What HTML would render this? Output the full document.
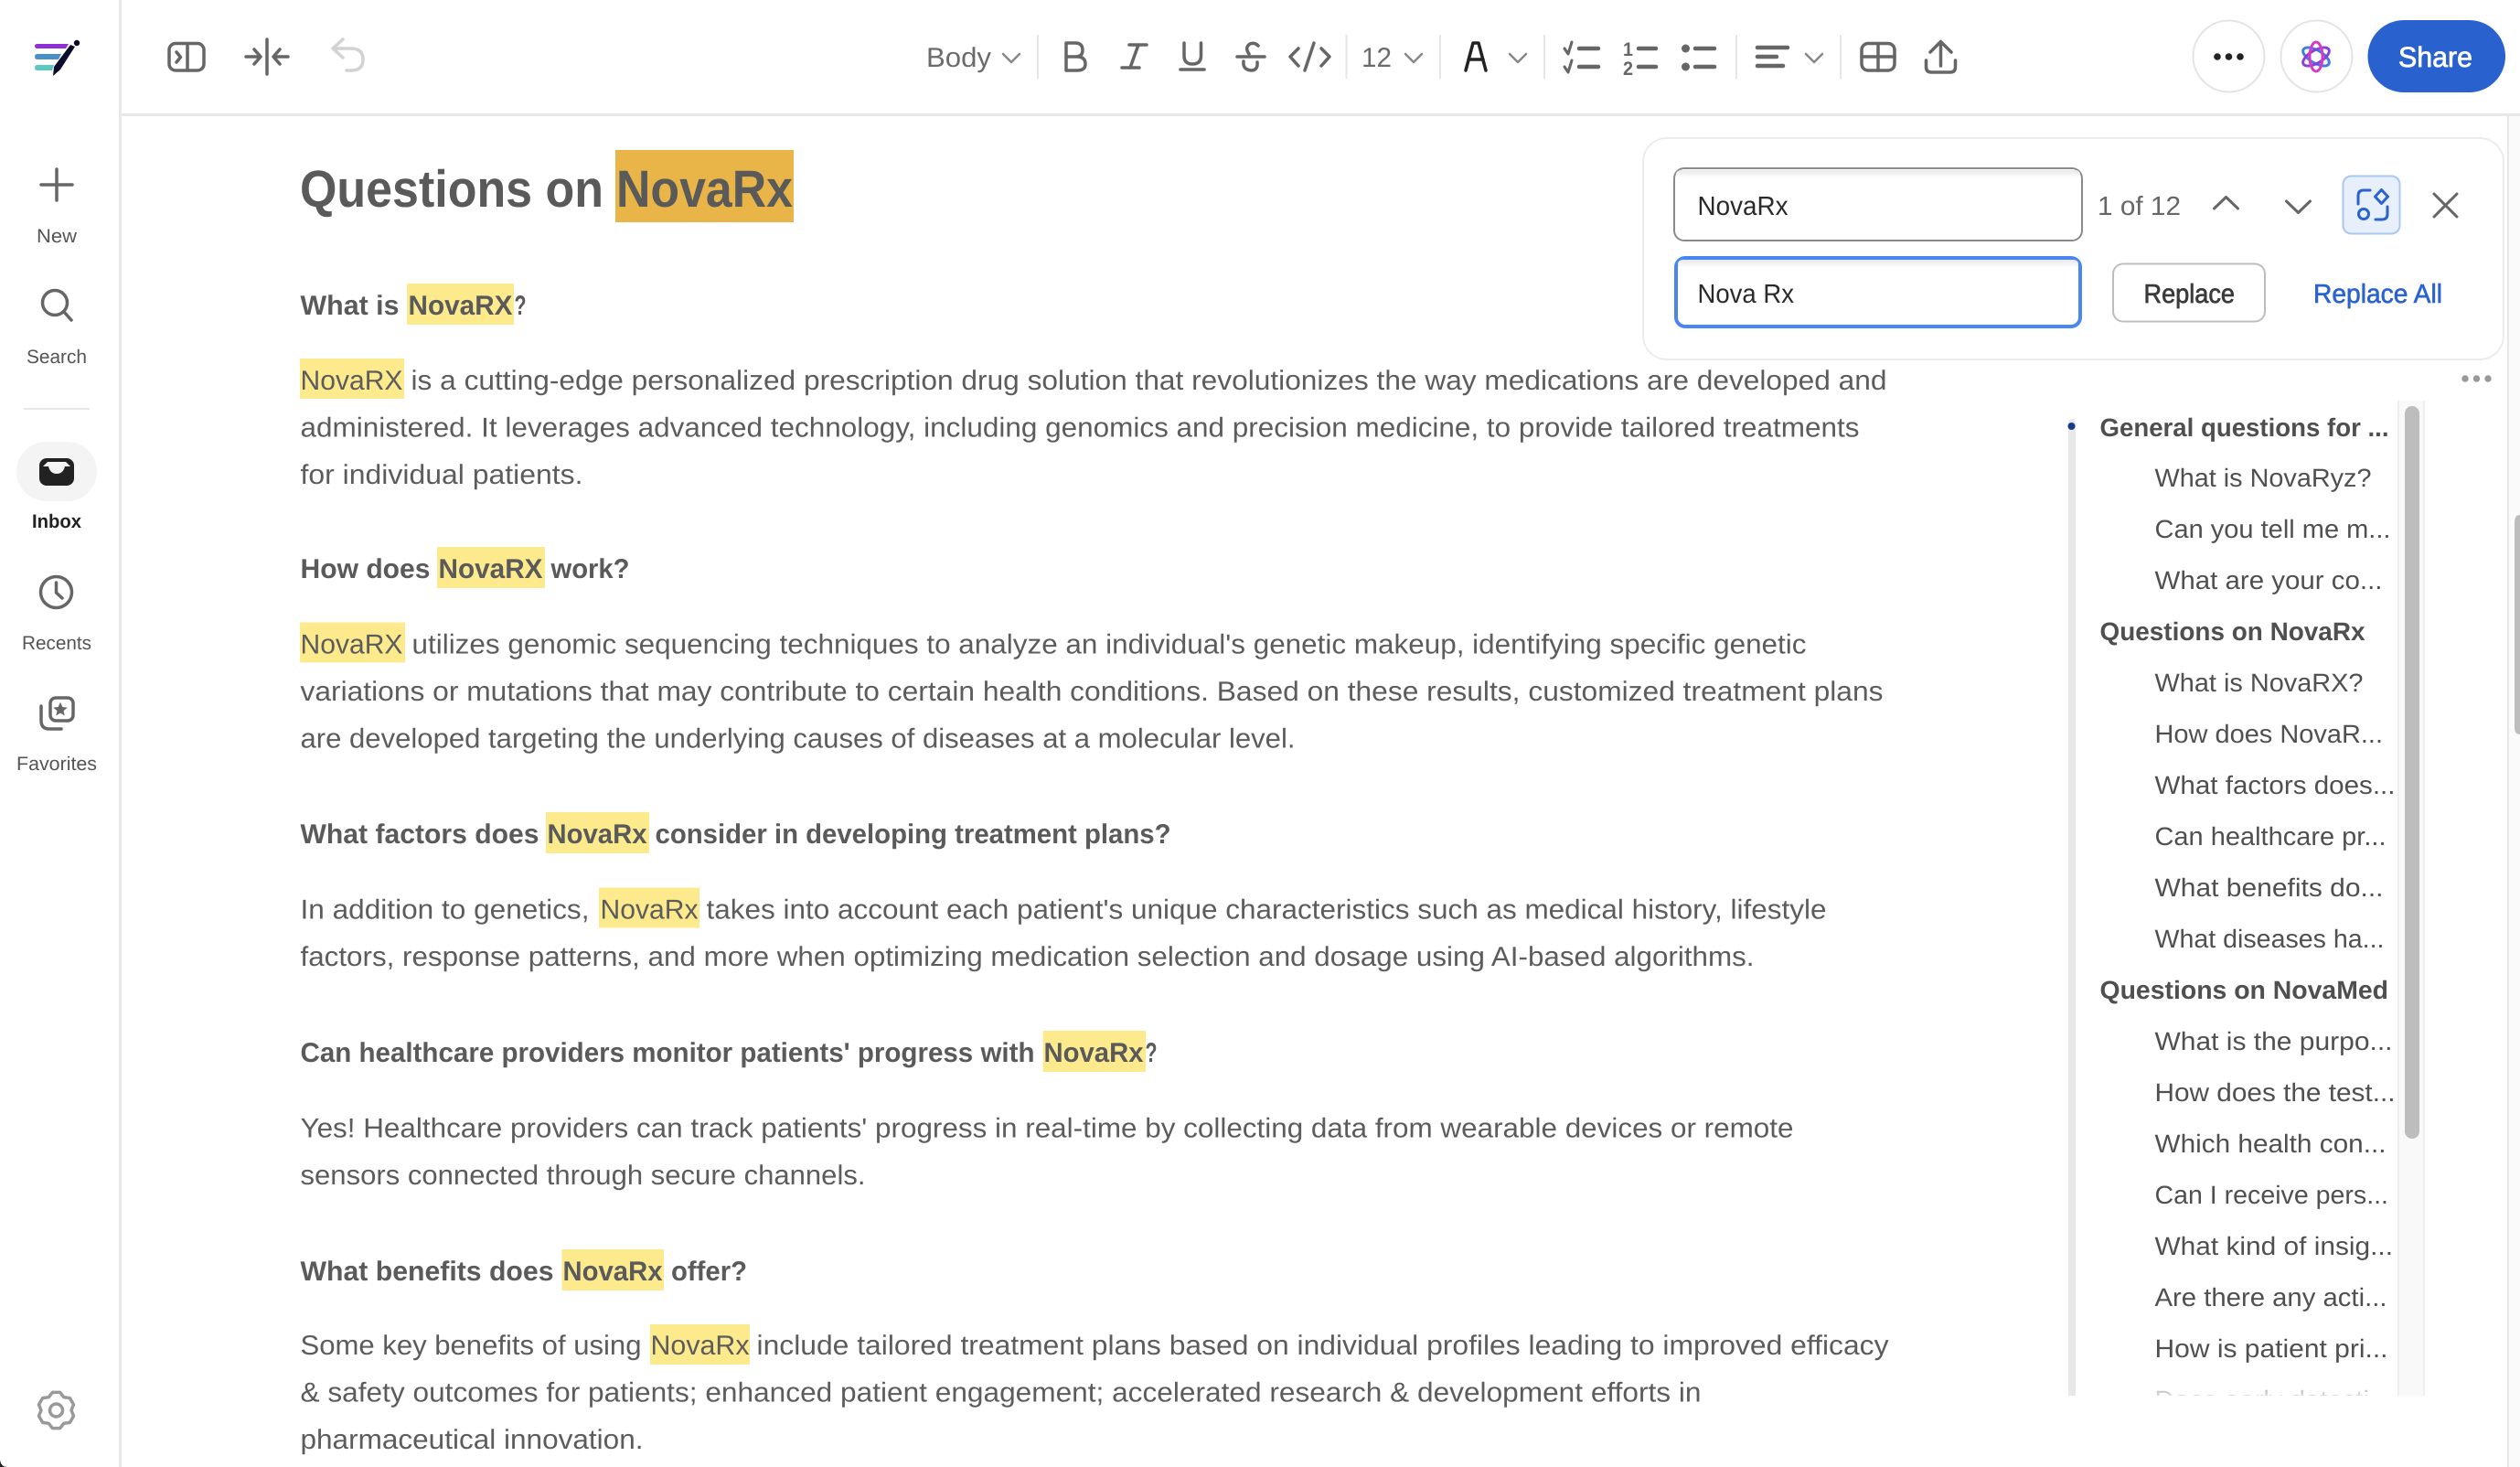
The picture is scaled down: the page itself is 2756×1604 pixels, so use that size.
<!DOCTYPE html>
<html lang="en"><head><meta charset="utf-8"><title>Questions on NovaRx</title>
<style>
html,body{margin:0;padding:0;background:#fff;width:2756px;height:1604px;overflow:hidden}
svg{display:block}
text{font-family:"Liberation Sans",Arial,sans-serif;text-rendering:geometricPrecision}
.b{font-size:30px;fill:#5c5c5c;transform:translate(-0.5px,-1px)}
.h{font-size:30px;font-weight:700;fill:#5a5a5a;transform:translate(-0.5px,-1px)}
.s{font-size:21px;fill:#555}
.t{font-size:28px;fill:#505050;transform:translate(-0.5px,-1px)}
.tb{font-size:28px;font-weight:700;fill:#4f4f4f;transform:translate(-0.5px,-1px)}
.i{fill:none;stroke:#666;stroke-width:3.5;stroke-linecap:round;stroke-linejoin:round}
.ch{fill:none;stroke:#888;stroke-width:2.5;stroke-linecap:round;stroke-linejoin:round}
.sep{stroke:#e6e6e6;stroke-width:2}
.hl{fill:#fcea8d}
</style></head><body>
<svg xmlns="http://www.w3.org/2000/svg" width="2756" height="1604" viewBox="0 0 2756 1604">
<defs>
<linearGradient id="fade" x1="0" y1="0" x2="0" y2="1"><stop offset="0" stop-color="#fff" stop-opacity="0"/><stop offset="1" stop-color="#fff" stop-opacity=".8"/></linearGradient>
<linearGradient id="ins" x1="0" y1="0" x2="0" y2="1"><stop offset="0" stop-color="#e9e9e9"/><stop offset="1" stop-color="#fff"/></linearGradient>
<clipPath id="tocclip"><rect x="2250" y="430" width="410" height="1096"/></clipPath>
</defs>

<!-- frame lines -->
<rect x="130" y="0" width="3" height="1604" fill="#e8e8e8"/>
<rect x="133" y="124" width="2623" height="3" fill="#e8e8e8"/>
<rect x="2742" y="127" width="14" height="1477" fill="#fafafa"/>
<rect x="2742" y="127" width="2" height="1477" fill="#e8e8e8"/>
<path d="M2756 563 Q2750 563 2750 571 V795 Q2750 803 2756 803 Z" fill="#bdbdbd"/>
<path d="M0 1596 Q1 1604 8 1604 H0 Z" fill="#222"/>

<!-- logo -->
<path d="M41 48 H75 L72 53 H41 Q38 53 38 50.5 Q38 48 41 48 Z" fill="#8e2fd8"/>
<path d="M41 59 H67 L64 65 H41 Q38 65 38 62 Q38 59 41 59 Z" fill="#4a90c8"/>
<path d="M41 71 H59 L57 77 H41 Q38 77 38 74 Q38 71 41 71 Z" fill="#5cc8c0"/>
<path d="M58 83 L59 73 L77 49 L82 51 L66 76 Z" fill="#0b0b2e"/>
<circle cx="84" cy="47" r="3.200" fill="#0b0b2e"/>

<!-- sidebar -->
<path d="M62 185 V219 M45 202 H79" class="i"/>
<text x="40" y="265" class="s" textLength="44" lengthAdjust="spacingAndGlyphs">New</text>
<circle cx="60" cy="331" r="13.500" class="i"/>
<path d="M70 341 L78 350" class="i"/>
<text x="29" y="397" class="s" textLength="66" lengthAdjust="spacingAndGlyphs">Search</text>
<rect x="26" y="446" width="72" height="2" fill="#e8e8e8"/>
<rect x="18" y="483" width="88" height="65" rx="32.500" fill="#f4f4f4"/>
<rect x="43" y="501" width="38" height="30" rx="8" fill="#222"/>
<path d="M47 510 L52 505 H72 L77 510 H71 Q69 518 62 518 Q55 518 53 510 Z" fill="#f4f4f4"/>
<text x="35" y="577" font-size="21" font-weight="700" fill="#222" textLength="54" lengthAdjust="spacingAndGlyphs">Inbox</text>
<circle cx="61.500" cy="647.500" r="17" class="i"/>
<path d="M61.500 637 V648 L68 654" class="i"/>
<text x="24" y="710" class="s" textLength="76" lengthAdjust="spacingAndGlyphs">Recents</text>
<rect x="55" y="763" width="25" height="25" rx="6" class="i"/>
<path d="M45 772 V788 Q45 797 54 797 H67" class="i"/>
<path d="M66 769 L68 773.500 L72.500 774 L69 777 L70 781.500 L66 779 L62 781.500 L63 777 L59.500 774 L64 773.500 Z" fill="#666" stroke="#666"/>
<text x="18" y="842" class="s" textLength="88" lengthAdjust="spacingAndGlyphs">Favorites</text>
<path d="M57.300 1522.400 L65.700 1522.400 L69.750 1527.700 L76.400 1528.600 L80.500 1535.800 L78 1542 L80.500 1548.200 L76.400 1555.400 L69.750 1556.300 L65.700 1561.600 L57.300 1561.600 L53.250 1556.300 L46.600 1555.400 L42.500 1548.200 L45 1542 L42.500 1535.800 L46.600 1528.600 L53.250 1527.700 Z" class="i" style="stroke:#999"/>
<circle cx="61.500" cy="1542" r="7" class="i" style="stroke:#999"/>

<!-- toolbar left -->
<rect x="185" y="47.500" width="38" height="29.500" rx="7" class="i"/>
<path d="M205 48 V77" class="i"/>
<path d="M193 57 L197.500 62.500 L193 68" class="i"/>
<path d="M292 43 V81 M269 62 H284 M278 54 L285 62 L278 70 M315 62 H300 M306 54 L299 62 L306 70" class="i"/>
<path d="M375 43 L364 53 L375 63 M364 53 H384 Q397 53 397 65 Q397 77 384 77 H379" class="i" style="stroke:#d2d2d2"/>

<!-- toolbar middle -->
<text x="1013" y="73" font-size="30" fill="#6b6b6b" textLength="71" lengthAdjust="spacingAndGlyphs">Body</text>
<path d="M1097 59 L1106 68 L1115 59" class="ch"/>
<path d="M1135 38 V86 M1472.500 38 V86 M1575 38 V86 M1689 38 V86 M1899 38 V86 M2013 38 V86" class="sep"/>
<path d="M1166 47 H1176 Q1184 47 1184 55 Q1184 62 1176 62 H1166 Z M1166 62 H1178 Q1187 62 1187 70 Q1187 77 1178 77 H1166 Z" class="i"/>
<path d="M1235 49 H1254 M1245 49 L1236 74 M1227 74 H1246" class="i"/>
<path d="M1295 47 V61 Q1295 70 1304 70 Q1313.500 70 1313.500 61 V47 M1291 76 H1317" class="i" />
<path d="M1353 62 H1383 M1376 50 Q1372 46 1367 48 Q1361 52 1366 59 M1360 67 Q1359 76 1368 77 Q1376 77 1375 68" class="i"/>
<path d="M1420 53 L1411 62 L1420 72 M1445 53 L1454 62 L1445 72 M1437 47 L1427 77" class="i"/>
<text x="1489" y="73" font-size="30" fill="#6b6b6b" textLength="33" lengthAdjust="spacingAndGlyphs">12</text>
<path d="M1537 59 L1546 68 L1555 59" class="ch"/>
<path d="M1603 77 L1611 47 H1617 L1625 77 M1606 65 H1622" class="i" style="stroke:#222"/>
<path d="M1651 59 L1660 68 L1669 59" class="ch"/>

<!-- lists -->
<path d="M1711 53 L1715 59 L1719 46 M1711 73 L1715 79 L1719 66" class="i" style="stroke-width:3"/>
<path d="M1727 53 H1748 M1727 73 H1748" class="i" style="stroke-width:4.500"/>
<text x="1775" y="61" font-size="21" font-weight="700" fill="#666" textLength="11" lengthAdjust="spacingAndGlyphs">1</text>
<text x="1775" y="82" font-size="21" font-weight="700" fill="#666" textLength="11" lengthAdjust="spacingAndGlyphs">2</text>
<path d="M1792 53 H1811 M1792 73 H1811" class="i" style="stroke-width:4.500"/>
<circle cx="1843.500" cy="53" r="4.500" fill="#666"/><circle cx="1843.500" cy="73" r="4.500" fill="#666"/>
<path d="M1854 53 H1875 M1854 73 H1875" class="i" style="stroke-width:4.500"/>
<path d="M1922 52 H1955 M1922 62 H1943 M1922 72 H1950" class="i" style="stroke-width:4.500"/>
<path d="M1975 59 L1984 68 L1993 59" class="ch"/>
<rect x="2036" y="47.500" width="36" height="29.500" rx="7" class="i"/>
<path d="M2054 48 V77 M2036 62 H2072" class="i"/>
<path d="M2122.500 72 V46 M2111 57 L2122.500 45.500 L2134 57 M2106.500 66 V73 Q2106.500 79 2112 79 H2133 Q2138.500 79 2138.500 73 V66" class="i"/>

<!-- right buttons -->
<circle cx="2437.500" cy="61.500" r="39" fill="#fff" stroke="#e4e4e4" stroke-width="2"/>
<circle cx="2425" cy="62" r="3.800" fill="#222"/><circle cx="2437.500" cy="62" r="3.800" fill="#222"/><circle cx="2450" cy="62" r="3.800" fill="#222"/>
<circle cx="2533.500" cy="61.500" r="39" fill="#fff" stroke="#e4e4e4" stroke-width="2"/>
<g fill="none" stroke-width="3">
<ellipse cx="2533" cy="62" rx="7" ry="16" stroke="#3d7fe0" transform="rotate(-60 2533 62)"/>
<ellipse cx="2533" cy="62" rx="7" ry="16" stroke="#8a3fd8" transform="rotate(60 2533 62)"/>
<ellipse cx="2533" cy="62" rx="7" ry="16" stroke="#d43cc4"/>
</g>
<rect x="2589.500" y="22" width="150.500" height="79" rx="39.500" fill="#2962cf"/>
<text x="2623" y="73" font-size="31" fill="#fff" stroke="#fff" stroke-width=".7" textLength="81" lengthAdjust="spacingAndGlyphs">Share</text>

<!-- document -->
<rect x="673" y="164" width="195" height="79" fill="#e9b548"/>
<text x="328" y="226" font-size="57" font-weight="700" fill="#5a5a5a" textLength="332" lengthAdjust="spacingAndGlyphs">Questions on</text>
<text x="674" y="226" font-size="57" font-weight="700" fill="#5a5a5a" textLength="193" lengthAdjust="spacingAndGlyphs">NovaRx</text>

<rect class="hl" x="445" y="310" width="117" height="45"/>
<text class="h" x="329" y="345" textLength="108" lengthAdjust="spacingAndGlyphs">What is</text>
<text class="h" x="447" y="345" textLength="114" lengthAdjust="spacingAndGlyphs">NovaRX</text>
<text class="h" x="563" y="345" textLength="13" lengthAdjust="spacingAndGlyphs">?</text>

<rect class="hl" x="328" y="392" width="114" height="44"/>
<text class="b" x="329" y="427" textLength="112" lengthAdjust="spacingAndGlyphs">NovaRX</text>
<text class="b" x="450" y="427" textLength="1614" lengthAdjust="spacingAndGlyphs">is a cutting-edge personalized prescription drug solution that revolutionizes the way medications are developed and</text>
<text class="b" x="329" y="478.500" textLength="1705" lengthAdjust="spacingAndGlyphs">administered. It leverages advanced technology, including genomics and precision medicine, to provide tailored treatments</text>
<text class="b" x="329" y="530" textLength="309" lengthAdjust="spacingAndGlyphs">for individual patients.</text>

<rect class="hl" x="478" y="598" width="118" height="45"/>
<text class="h" x="329" y="633" textLength="142" lengthAdjust="spacingAndGlyphs">How does</text>
<text class="h" x="480" y="633" textLength="114" lengthAdjust="spacingAndGlyphs">NovaRX</text>
<text class="h" x="603" y="633" textLength="86" lengthAdjust="spacingAndGlyphs">work?</text>

<rect class="hl" x="328" y="680.500" width="115" height="44"/>
<text class="b" x="329" y="715.500" textLength="112" lengthAdjust="spacingAndGlyphs">NovaRX</text>
<text class="b" x="451" y="715.500" textLength="1525" lengthAdjust="spacingAndGlyphs">utilizes genomic sequencing techniques to analyze an individual's genetic makeup, identifying specific genetic</text>
<text class="b" x="329" y="767" textLength="1731" lengthAdjust="spacingAndGlyphs">variations or mutations that may contribute to certain health conditions. Based on these results, customized treatment plans</text>
<text class="b" x="329" y="818.500" textLength="1088" lengthAdjust="spacingAndGlyphs">are developed targeting the underlying causes of diseases at a molecular level.</text>

<rect class="hl" x="597" y="888" width="113" height="45"/>
<text class="h" x="329" y="923" textLength="261" lengthAdjust="spacingAndGlyphs">What factors does</text>
<text class="h" x="599" y="923" textLength="109" lengthAdjust="spacingAndGlyphs">NovaRx</text>
<text class="h" x="717" y="923" textLength="564" lengthAdjust="spacingAndGlyphs">consider in developing treatment plans?</text>

<rect class="hl" x="655" y="970.500" width="110" height="44"/>
<text class="b" x="329" y="1005.500" textLength="316" lengthAdjust="spacingAndGlyphs">In addition to genetics,</text>
<text class="b" x="657" y="1005.500" textLength="107" lengthAdjust="spacingAndGlyphs">NovaRx</text>
<text class="b" x="773" y="1005.500" textLength="1225" lengthAdjust="spacingAndGlyphs">takes into account each patient's unique characteristics such as medical history, lifestyle</text>
<text class="b" x="329" y="1057" textLength="1590" lengthAdjust="spacingAndGlyphs">factors, response patterns, and more when optimizing medication selection and dosage using AI-based algorithms.</text>

<rect class="hl" x="1140.700" y="1127" width="112.300" height="45"/>
<text class="h" x="329" y="1162" textLength="803" lengthAdjust="spacingAndGlyphs">Can healthcare providers monitor patients' progress with</text>
<text class="h" x="1142" y="1162" textLength="109" lengthAdjust="spacingAndGlyphs">NovaRx</text>
<text class="h" x="1253" y="1162" textLength="13" lengthAdjust="spacingAndGlyphs">?</text>

<text class="b" x="329" y="1244.500" textLength="1633" lengthAdjust="spacingAndGlyphs">Yes! Healthcare providers can track patients' progress in real-time by collecting data from wearable devices or remote</text>
<text class="b" x="329" y="1296" textLength="618" lengthAdjust="spacingAndGlyphs">sensors connected through secure channels.</text>

<rect class="hl" x="614.500" y="1366" width="111.500" height="45"/>
<text class="h" x="329" y="1401" textLength="277" lengthAdjust="spacingAndGlyphs">What benefits does</text>
<text class="h" x="616" y="1401" textLength="109" lengthAdjust="spacingAndGlyphs">NovaRx</text>
<text class="h" x="734.500" y="1401" textLength="83" lengthAdjust="spacingAndGlyphs">offer?</text>

<rect class="hl" x="711" y="1448" width="109" height="44"/>
<text class="b" x="329" y="1482" textLength="373" lengthAdjust="spacingAndGlyphs">Some key benefits of using</text>
<text class="b" x="712" y="1482" textLength="108" lengthAdjust="spacingAndGlyphs">NovaRx</text>
<text class="b" x="828" y="1482" textLength="1238" lengthAdjust="spacingAndGlyphs">include tailored treatment plans based on individual profiles leading to improved efficacy</text>
<text class="b" x="329" y="1533.500" textLength="1532" lengthAdjust="spacingAndGlyphs">&amp; safety outcomes for patients; enhanced patient engagement; accelerated research &amp; development efforts in</text>
<text class="b" x="329" y="1585" textLength="375" lengthAdjust="spacingAndGlyphs">pharmaceutical innovation.</text>

<!-- find & replace panel -->
<rect x="1797" y="151" width="941" height="242" rx="26" fill="#fff" stroke="#ececec" stroke-width="2"/>
<rect x="1831" y="184" width="446" height="79" rx="11" fill="#fff" stroke="#8a8a8a" stroke-width="2"/>
<rect x="1833" y="186" width="442" height="9" rx="5" fill="url(#ins)"/>
<text x="1856.500" y="235" font-size="29" fill="#2a2a2a" textLength="99" lengthAdjust="spacingAndGlyphs">NovaRx</text>
<text x="2294" y="235" font-size="29" fill="#666" textLength="91" lengthAdjust="spacingAndGlyphs">1 of 12</text>
<path d="M2421.500 228 L2434.500 215.500 L2447.500 228" class="i" style="stroke-width:3"/>
<path d="M2500.500 220 L2513.500 232.500 L2526.500 220" class="i" style="stroke-width:3"/>
<rect x="2562.500" y="192.500" width="62" height="63" rx="9" fill="#e6effa" stroke="#aac7f2" stroke-width="2"/>
<path d="M2592 208 H2585 Q2579 208 2579 214 V223 M2611 226 V234 Q2611 240 2605 240 H2598" fill="none" stroke="#2a62d0" stroke-width="3" stroke-linecap="round"/>
<path d="M2604.500 207.500 L2611.500 215 L2604.500 222.500 L2597.500 215 Z" fill="none" stroke="#2a62d0" stroke-width="3" stroke-linejoin="round"/>
<circle cx="2585" cy="234" r="5.500" fill="none" stroke="#2a62d0" stroke-width="3"/>
<path d="M2662 212 L2687 237 M2687 212 L2662 237" class="i" style="stroke-width:3"/>
<rect x="1833" y="282" width="442" height="75" rx="10" fill="#fff" stroke="#4a86f0" stroke-width="4"/>
<rect x="1835" y="284" width="438" height="9" rx="5" fill="url(#ins)"/>
<text x="1856.500" y="331" font-size="29" fill="#2a2a2a" textLength="105.500" lengthAdjust="spacingAndGlyphs">Nova Rx</text>
<rect x="2311" y="288.500" width="166" height="63" rx="11" fill="#fff" stroke="#bdbdbd" stroke-width="2"/>
<text x="2344.500" y="331" font-size="29" fill="#3a3a3a" stroke="#3a3a3a" stroke-width=".7" textLength="99.500" lengthAdjust="spacingAndGlyphs">Replace</text>
<text x="2530" y="331" font-size="29" fill="#2a62d0" stroke="#2a62d0" stroke-width=".6" textLength="141" lengthAdjust="spacingAndGlyphs">Replace All</text>
<circle cx="2696" cy="414" r="3.700" fill="#999"/><circle cx="2708.500" cy="414" r="3.700" fill="#999"/><circle cx="2721" cy="414" r="3.700" fill="#999"/>

<!-- outline -->
<g clip-path="url(#tocclip)">
<rect x="2262" y="458" width="8" height="1070" rx="4" fill="#e8e8e8"/>
<circle cx="2265.500" cy="466" r="4" fill="#153c8c"/>
<text class="tb" x="2297" y="478" textLength="316" lengthAdjust="spacingAndGlyphs">General questions for ...</text>
<text class="t" x="2357" y="533" textLength="237" lengthAdjust="spacingAndGlyphs">What is NovaRyz?</text>
<text class="t" x="2357" y="589" textLength="258" lengthAdjust="spacingAndGlyphs">Can you tell me m...</text>
<text class="t" x="2357" y="645" textLength="249" lengthAdjust="spacingAndGlyphs">What are your co...</text>
<text class="tb" x="2297" y="701" textLength="290" lengthAdjust="spacingAndGlyphs">Questions on NovaRx</text>
<text class="t" x="2357" y="757" textLength="228" lengthAdjust="spacingAndGlyphs">What is NovaRX?</text>
<text class="t" x="2357" y="813" textLength="249.500" lengthAdjust="spacingAndGlyphs">How does NovaR...</text>
<text class="t" x="2357" y="869" textLength="263" lengthAdjust="spacingAndGlyphs">What factors does...</text>
<text class="t" x="2357" y="925" textLength="253" lengthAdjust="spacingAndGlyphs">Can healthcare pr...</text>
<text class="t" x="2357" y="981" textLength="250" lengthAdjust="spacingAndGlyphs">What benefits do...</text>
<text class="t" x="2357" y="1037" textLength="251" lengthAdjust="spacingAndGlyphs">What diseases ha...</text>
<text class="tb" x="2297" y="1093" textLength="315.500" lengthAdjust="spacingAndGlyphs">Questions on NovaMed</text>
<text class="t" x="2357" y="1149" textLength="260" lengthAdjust="spacingAndGlyphs">What is the purpo...</text>
<text class="t" x="2357" y="1205" textLength="263" lengthAdjust="spacingAndGlyphs">How does the test...</text>
<text class="t" x="2357" y="1261" textLength="253" lengthAdjust="spacingAndGlyphs">Which health con...</text>
<text class="t" x="2357" y="1317" textLength="255.500" lengthAdjust="spacingAndGlyphs">Can I receive pers...</text>
<text class="t" x="2357" y="1373" textLength="260.500" lengthAdjust="spacingAndGlyphs">What kind of insig...</text>
<text class="t" x="2357" y="1429" textLength="254" lengthAdjust="spacingAndGlyphs">Are there any acti...</text>
<text class="t" x="2357" y="1485" textLength="255" lengthAdjust="spacingAndGlyphs">How is patient pri...</text>
<text class="t" x="2357" y="1541" textLength="259" lengthAdjust="spacingAndGlyphs">Does early detecti...</text>
<rect x="2272" y="1490" width="350" height="36" fill="url(#fade)"/>
<rect x="2623" y="438" width="29" height="1088" fill="#f9f9f9"/>
<rect x="2622" y="438" width="2" height="1088" fill="#eeeeee"/>
<rect x="2650" y="438" width="2" height="1088" fill="#eeeeee"/>
<rect x="2630" y="444" width="16" height="801" rx="8" fill="#bdbdbd"/>
</g>
</svg>
</body></html>
